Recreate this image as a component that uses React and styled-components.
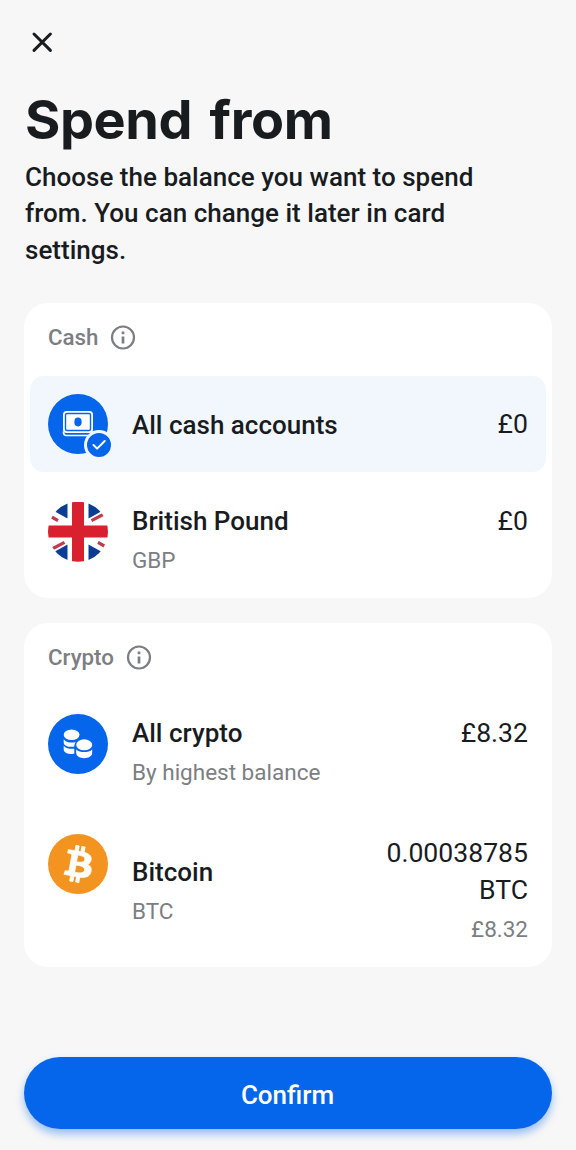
import styled, { createGlobalStyle } from 'styled-components';

const GlobalStyle = createGlobalStyle`
    * {
        box-sizing: border-box;
    }

    body {
        margin: 0;
        background: #f7f7f7;
        color: #191c1f;
        font-family: Roboto, "Liberation Sans", sans-serif;
    }
`

const Screen = styled.main`
    display: flex;
    flex-direction: column;
    height: 1150px;
    padding: 30px 24px 21px;
`

const CloseButton = styled.button`
    display: flex;
    width: 24px;
    height: 24px;
    margin: 0 0 0 6px;
    padding: 0;
    border: none;
    background: none;
    color: inherit;
    cursor: pointer;
`

const Title = styled.h1`
    margin: 32px 0 0 1px;
    font-family: Inter, "Liberation Sans", sans-serif;
    font-size: 54px;
    font-weight: 700;
    line-height: 67px;
    letter-spacing: -0.4px;
    word-spacing: 5px;
    white-space: nowrap;
`

const Description = styled.p`
    width: 480px;
    margin: 6px 0 35px 1px;
    font-size: 26px;
    font-weight: 500;
    line-height: 36.4px;
    letter-spacing: 0.02px;
`

const Card = styled.section`
    margin-bottom: 25px;
    padding: 0 6px 6px;
    border-radius: 24px;
    background: #fff;
`

const CardHeader = styled.header`
    display: flex;
    align-items: center;
    gap: 12px;
    height: 73px;
    padding: 0 18px 5px;
    color: #7b7e82;
`

const CardTitle = styled.h2`
    margin: 0;
    font-size: 22.3px;
    font-weight: 500;
    line-height: 30px;
`

const Accounts = styled.div`
    display: flex;
    flex-direction: column;
    gap: 12px;
`

const Account = styled.div`
    display: flex;
    align-items: ${props => props.$single ? 'center' : 'flex-start'};
    gap: 24px;
    padding: 18px;
    border-radius: 14px;
    background: ${props => props.$selected ? '#f2f7fd' : 'transparent'};
    cursor: pointer;
`

const Avatar = styled.div`
    position: relative;
    flex: none;
    width: 60px;
    height: 60px;
    border-radius: 50%;

    svg {
        display: block;
    }
`

const Badge = styled.span`
    position: absolute;
    right: -6px;
    bottom: -6px;
    width: 30px;
    height: 30px;
    border: 3px solid #f2f7fd;
    border-radius: 50%;
    background: #0666eb;
`

const Names = styled.div`
    flex: 1;
    align-self: center;
`

const Amounts = styled.div`
    width: 150px;
    text-align: right;
`

const Name = styled.div`
    padding-top: 1px;
    font-size: 26px;
    font-weight: 500;
    line-height: 36px;
`

const Amount = styled.div`
    padding-top: 1px;
    font-size: 26.6px;
    font-weight: 400;
    line-height: 36.5px;
`

const Detail = styled.div`
    padding: 8px 0 1px;
    font-size: 22.5px;
    line-height: 26px;
    color: #7b7e82;
`

const ConfirmButton = styled.button`
    height: 72px;
    margin-top: auto;
    padding: 3px 1px 0 0;
    border: none;
    border-radius: 36px;
    background: #0666eb;
    box-shadow: 0 5px 9px rgba(6, 102, 235, 0.4);
    color: #fff;
    font-family: inherit;
    font-size: 26px;
    font-weight: 500;
    cursor: pointer;
`

function CloseIcon() {
    return (
        <svg width="24" height="24" viewBox="0 0 24 24" fill="none" stroke="currentColor" strokeWidth="3" strokeLinecap="round">
            <path d="M4 4l16.4 16.4M20.4 4L4 20.4" />
        </svg>
    )
}

function InfoIcon() {
    return (
        <svg width="26" height="26" viewBox="0 0 26 26" fill="none" stroke="currentColor" strokeWidth="2.2">
            <circle cx="13" cy="13.500" r="11" />
            <path d="M13 12.500v7M13 7.500v2.800" strokeWidth="2.7" />
        </svg>
    )
}

function CashIcon() {
    return (
        <svg width="60" height="60" viewBox="0 0 60 60" fill="none">
            <circle cx="30" cy="30" r="30" fill="#0666eb" />
            <path d="M15.5 37.500v1q0 3 3 3h23q3 0 3-3v-1" stroke="#fff" strokeWidth="1.6" />
            <rect x="15" y="17" width="30" height="22" rx="3.5" fill="#fff" />
            <rect x="17.500" y="19.5" width="25" height="17" rx="1.5" stroke="#0666eb" strokeWidth="1.4" />
            <ellipse cx="30" cy="28" rx="3.7" ry="4.4" fill="#0666eb" />
        </svg>
    )
}

function CheckIcon() {
    return (
        <svg width="24" height="24" viewBox="0 0 24 24" fill="none" stroke="#fff" strokeWidth="2" strokeLinecap="round" strokeLinejoin="round">
            <path d="M6.500 12l3.600 3.600 7.600-7.600" />
        </svg>
    )
}

function FlagIcon() {
    return (
        <svg width="60" height="60" viewBox="0 0 60 60">
            <clipPath id="flag">
                <circle cx="30" cy="29.700" r="30" />
            </clipPath>
            <g clipPath="url(#flag)">
                <path fill="#fff" d="M0 0h60v60H0z" />
                <path fill="#0c3c94" d="M19.500 0v16.500L6 9V0zM40.500 0v16.500L54 9V0zM19.500 60V42.500L6 50v10zM40.500 60V42.500L54 50v10z" />
                <path stroke="#c43a4c" strokeWidth="3.200" d="M2 14l8 4.700M58 11l-14.500 7.700M2 48l14.500-7.700M58 45l-8-4.700" />
                <path fill="#d8202f" d="M24 0h12v23.500h24v12H36V60H24V35.500H0v-12h24z" />
            </g>
        </svg>
    )
}

function CoinsIcon() {
    return (
        <svg width="60" height="60" viewBox="0 0 60 60">
            <circle cx="30" cy="30" r="30" fill="#0666eb" />
            <g fill="#fff">
                <ellipse cx="23.600" cy="20.800" rx="7.900" ry="5.300" />
                <path d="M15.700 25.200c2 2.700 5 3.300 8 3.300 1.500 0 2.800-.1 4-.5-.9 1.300-1.300 2.600-1.400 4.600-5 .7-10.600-.5-10.600-4.200z" />
                <path d="M15.700 31.800c2 2.600 5.600 3.200 10.600 3v5c-5 .5-10.600-.7-10.600-4.400z" />
                <ellipse cx="36.200" cy="30.800" rx="8" ry="5.500" />
                <path d="M28.200 35.400c3.500 3.600 12.500 3.600 16 0v3.400c0 3.700-4 5.400-8 5.400s-8-1.700-8-5.400z" />
            </g>
        </svg>
    )
}

function BitcoinIcon() {
    return (
        <svg width="60" height="60" viewBox="0 0 32 32">
            <circle cx="16" cy="16" r="16" fill="#f39420" />
            <path fill="#fff" stroke="#fff" strokeWidth=".4" transform="rotate(-4 16 16)" d="M23.189 14.020c.314-2.096-1.283-3.223-3.465-3.975l.708-2.840-1.728-.430-.690 2.765c-.454-.114-.920-.220-1.385-.326l.695-2.783L15.596 6l-.708 2.839c-.376-.086-.746-.170-1.104-.260l.002-.009-2.384-.595-.460 1.846s1.283.294 1.256.312c.700.175.826.638.805 1.006l-.806 3.235c.048.012.110.030.180.057l-.183-.045-1.130 4.532c-.086.212-.303.531-.793.410.018.025-1.256-.313-1.256-.313l-.858 1.978 2.250.561c.418.105.828.215 1.231.318l-.715 2.872 1.727.430.708-2.840c.472.127.930.245 1.378.357l-.706 2.828 1.728.430.715-2.866c2.948.558 5.164.333 6.097-2.333.752-2.146-.037-3.385-1.588-4.192 1.130-.260 1.980-1.003 2.207-2.538zm-3.950 5.538c-.533 2.147-4.148.986-5.320.695l.950-3.805c1.172.293 4.929.872 4.370 3.110zm.535-5.569c-.487 1.953-3.495.960-4.470.717l.860-3.450c.975.243 4.118.696 3.610 2.733z" />
        </svg>
    )
}

const cards = [
    {
        title: 'Cash',
        accounts: [
            { icon: CashIcon, name: 'All cash accounts', amount: '£0', selected: true },
            { icon: FlagIcon, name: 'British Pound', detail: 'GBP', amount: '£0' },
        ],
    },
    {
        title: 'Crypto',
        accounts: [
            { icon: CoinsIcon, name: 'All crypto', detail: 'By highest balance', amount: '£8.32' },
            { icon: BitcoinIcon, name: 'Bitcoin', detail: 'BTC', amount: '0.00038785 BTC', converted: '£8.32' },
        ],
    },
];

function AccountRow({ account }) {
    const Icon = account.icon;

    return (
        <Account $selected={account.selected} $single={!account.detail}>
            <Avatar>
                <Icon />
                {account.selected && <Badge><CheckIcon /></Badge>}
            </Avatar>
            <Names>
                <Name>{account.name}</Name>
                {account.detail && <Detail>{account.detail}</Detail>}
            </Names>
            <Amounts>
                <Amount>{account.amount}</Amount>
                {account.converted && <Detail>{account.converted}</Detail>}
            </Amounts>
        </Account>
    )
}

function App() {
    return (
        <Screen>
            <GlobalStyle />
            <CloseButton aria-label="Close"><CloseIcon /></CloseButton>
            <Title>Spend from</Title>
            <Description>Choose the balance you want to spend from. You can change it later in card settings.</Description>

            { cards.map( (card) => (
                <Card key={card.title}>
                    <CardHeader>
                        <CardTitle>{card.title}</CardTitle>
                        <InfoIcon />
                    </CardHeader>
                    <Accounts>
                        { card.accounts.map( (account) => (
                            <AccountRow key={account.name} account={account} />
                        ) ) }
                    </Accounts>
                </Card>
            ) ) }

            <ConfirmButton>Confirm</ConfirmButton>
        </Screen>
    )
}

export default App;
